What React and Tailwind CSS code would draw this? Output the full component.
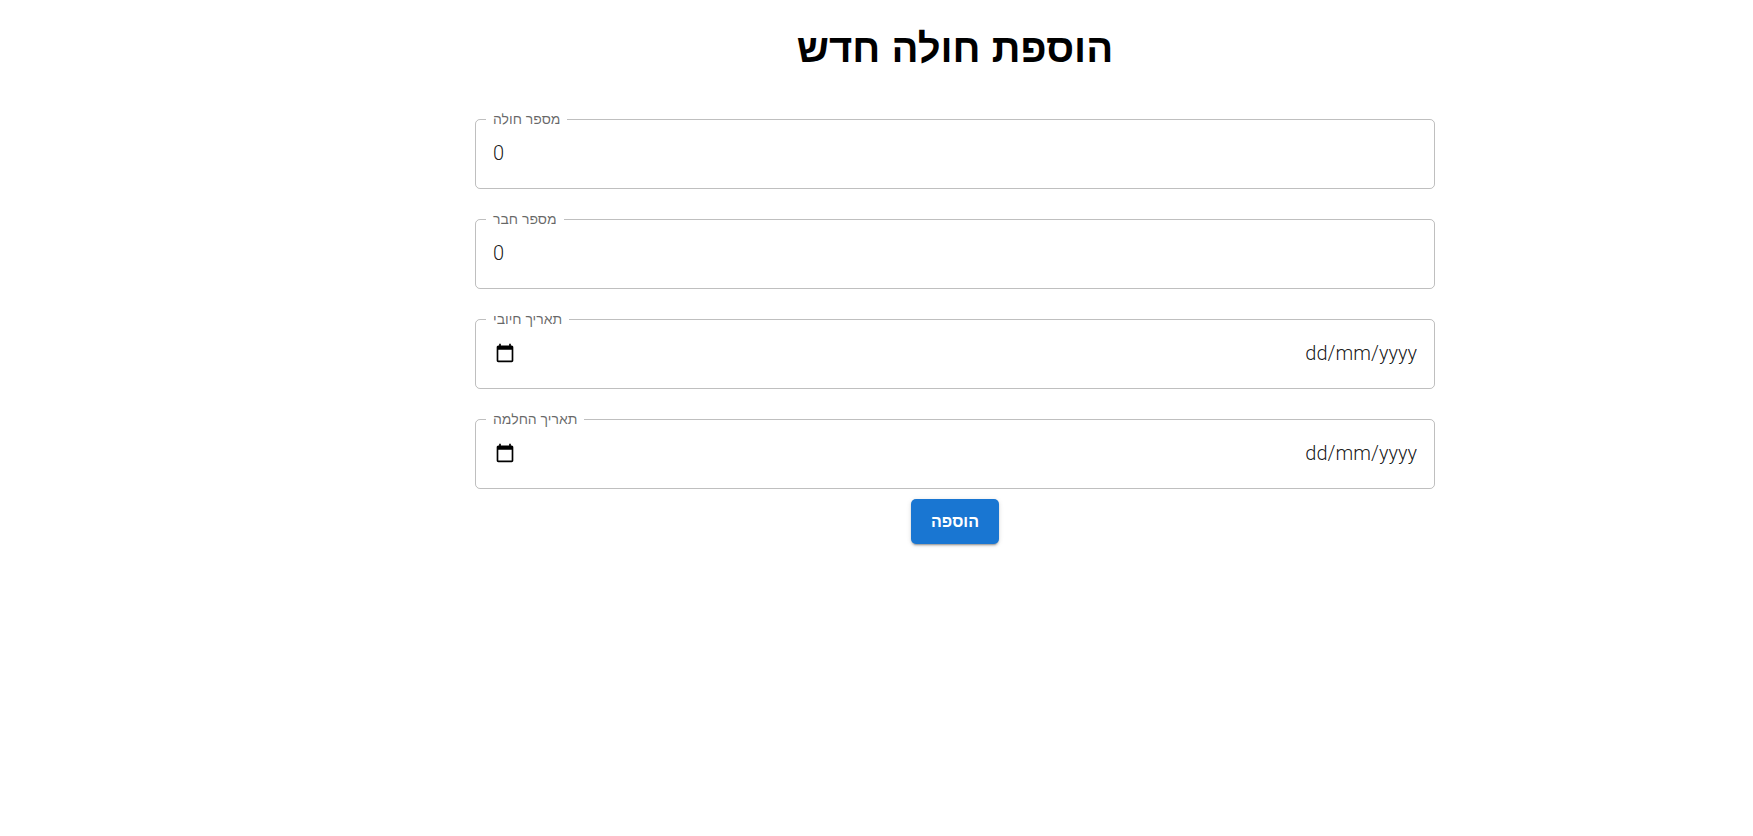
import { useRef } from "react";

function OutlinedField({ id, label, children }) {
  return (
    <fieldset className="mb-5 flex h-20 min-w-0 rounded-[5px] border border-black/25 px-[10px] focus-within:border-[#1976d2]">
      <legend className="h-5 px-[7px] text-[14px] leading-5 text-black/60">
        <label htmlFor={id} dir="rtl">{label}</label>
      </legend>
      <div className="flex h-12 w-full items-center px-[7px]">{children}</div>
    </fieldset>
  );
}

function CalendarIcon() {
  return (
    <svg viewBox="0 0 24 24" className="size-5" fill="currentColor" aria-hidden="true">
      <path d="M20 3h-1V1h-2v2H7V1H5v2H4c-1.100 0-2 .9-2 2v16c0 1.100.9 2 2 2h16c1.100 0 2-.9 2-2V5c0-1.100-.9-2-2-2zm0 18H4V8h16v13z" />
    </svg>
  );
}

function NumberField({ id, label }) {
  return (
    <OutlinedField id={id} label={label}>
      <input
        id={id}
        type="text"
        inputMode="numeric"
        defaultValue="0"
        className="w-full min-w-0 bg-transparent font-['Roboto','Liberation_Sans',sans-serif] text-xl font-light text-black/90 outline-none"
      />
    </OutlinedField>
  );
}

function DateField({ id, label }) {
  const input = useRef(null);
  return (
    <OutlinedField id={id} label={label}>
      <button
        type="button"
        aria-label={label}
        onClick={() => input.current.focus()}
        className="ml-[2px] shrink-0 cursor-pointer text-black"
      >
        <CalendarIcon />
      </button>
      <input
        ref={input}
        id={id}
        type="text"
        placeholder="dd/mm/yyyy"
        className="w-full min-w-0 bg-transparent text-right font-['Roboto','Liberation_Sans',sans-serif] text-xl font-light text-black/90 outline-none placeholder:text-black/90"
      />
    </OutlinedField>
  );
}

export default function App() {
  return (
    <main className="min-h-screen bg-white pl-[157px] font-['Liberation_Sans',Arial,sans-serif]">
      <form className="mx-auto w-full max-w-[960px] pt-6" onSubmit={(e) => e.preventDefault()}>
        <h1 dir="rtl" className="mb-[37px] text-center text-[40px] leading-[48px] font-bold text-black">
          הוספת חולה חדש
        </h1>
        <NumberField id="patient-id" label="מספר חולה" />
        <NumberField id="member-id" label="מספר חבר" />
        <DateField id="positive-date" label="תאריך חיובי" />
        <DateField id="recovery-date" label="תאריך החלמה" />
        <div className="-mt-[10px] flex justify-center">
          <button
            type="submit"
            dir="rtl"
            className="h-[45px] cursor-pointer rounded-[5px] bg-[#1976d2] px-5 text-[16px] font-semibold text-white shadow-[0_3px_1px_-2px_rgba(0,0,0,0.2),0_2px_2px_0_rgba(0,0,0,0.14),0_1px_5px_0_rgba(0,0,0,0.12)]"
          >
            הוספה
          </button>
        </div>
      </form>
    </main>
  );
}
